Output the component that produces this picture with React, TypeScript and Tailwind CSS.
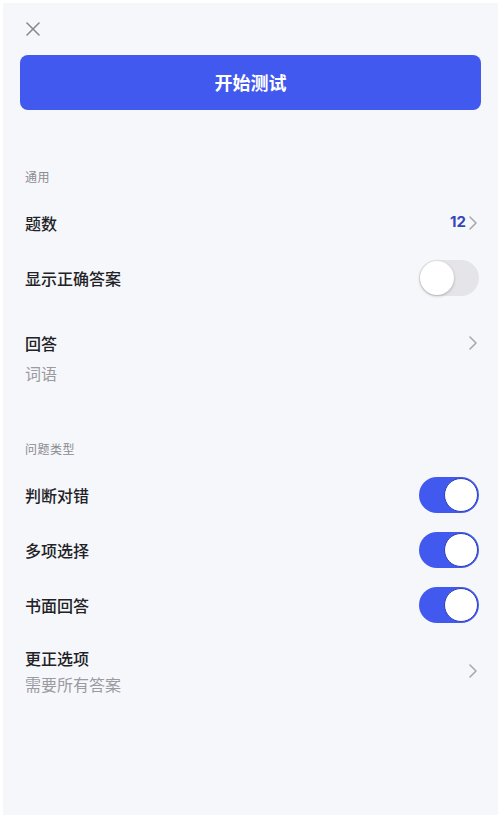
import React from "react";

const font = { fontFamily: '"Noto Sans CJK SC", "Noto Sans", sans-serif' };

function Chevron() {
  return (
    <svg width="10" height="16" viewBox="0 0 10 16" fill="none">
      <polyline points="2,2 8,8 2,14" stroke="#a8a8ae" strokeWidth="1.6" strokeLinecap="round" strokeLinejoin="round" />
    </svg>
  );
}

function Toggle({ on }: { on: boolean }) {
  if (on) {
    return (
      <div className="w-[60px] h-[36px] rounded-full bg-[#4259ef] flex items-center justify-end pr-[1px]">
        <div className="w-[34px] h-[34px] rounded-full bg-white border-[1.5px] border-[#2f40b8]" />
      </div>
    );
  }
  return (
    <div className="w-[60px] h-[36px] rounded-full bg-[#e4e4e9] flex items-center pl-[1px]">
      <div className="w-[34px] h-[34px] rounded-full bg-white shadow-[0_1px_3px_rgba(0,0,0,0.25)]" />
    </div>
  );
}

export default function App() {
  return (
    <div className="w-[504px] h-[820px] bg-white pl-[3px] pt-[3px] pr-[6px] pb-[5px]" style={font}>
      <div className="h-full bg-[#f6f7fb] px-[17px] pt-[18px]">
        <div className="pl-[5px] h-[16px]">
          <svg width="16" height="16" viewBox="0 0 16 16">
            <line x1="2" y1="2" x2="14" y2="14" stroke="#8a8a8e" strokeWidth="1.6" strokeLinecap="round" />
            <line x1="14" y1="2" x2="2" y2="14" stroke="#8a8a8e" strokeWidth="1.6" strokeLinecap="round" />
          </svg>
        </div>
        <div className="mt-[18px] h-[55px] rounded-[8px] bg-[#4259ef] flex items-center justify-center text-white text-[18px] font-semibold">
          开始测试
        </div>

        <div className="pl-[5px] pr-[2px]">
          <div className="mt-[59px] text-[12px] leading-[16px] tracking-[0.5px] text-[#8b8b90]">通用</div>

          <div className="mt-[10px] h-[55px] flex items-center justify-between">
            <span className="text-[16px] font-medium text-[#222226]">题数</span>
            <div className="flex items-center gap-[2px] pr-[1px]">
              <span className="text-[15px] font-bold text-[#3446b8]" style={{ fontFamily: 'Inter, "Noto Sans", sans-serif' }}>12</span>
              <Chevron />
            </div>
          </div>

          <div className="h-[55px] flex items-center justify-between">
            <span className="text-[16px] font-medium text-[#222226]">显示正确答案</span>
            <Toggle on={false} />
          </div>

          <div className="pt-[23px]">
            <div className="flex items-center justify-between h-[30px]">
              <span className="text-[16px] font-medium text-[#222226]">回答</span>
              <div className="pr-[1px]"><Chevron /></div>
            </div>
            <div className="h-[30px] leading-[30px] text-[16px] text-[#9a9aa0]">词语</div>
          </div>

          <div className="mt-[53px] text-[12px] leading-[16px] tracking-[0.5px] text-[#8b8b90]">问题类型</div>

          <div className="mt-[10px] h-[55px] flex items-center justify-between">
            <span className="text-[16px] font-medium text-[#222226]">判断对错</span>
            <Toggle on />
          </div>
          <div className="h-[55px] flex items-center justify-between">
            <span className="text-[16px] font-medium text-[#222226]">多项选择</span>
            <Toggle on />
          </div>
          <div className="h-[55px] flex items-center justify-between">
            <span className="text-[16px] font-medium text-[#222226]">书面回答</span>
            <Toggle on />
          </div>

          <div className="pt-[14px] flex items-center justify-between">
            <div className="flex flex-col">
              <span className="text-[16px] leading-[24px] font-medium text-[#222226]">更正选项</span>
              <span className="mt-[2px] text-[16px] leading-[24px] text-[#9a9aa0]">需要所有答案</span>
            </div>
            <div className="pr-[1px]"><Chevron /></div>
          </div>
        </div>
      </div>
    </div>
  );
}
